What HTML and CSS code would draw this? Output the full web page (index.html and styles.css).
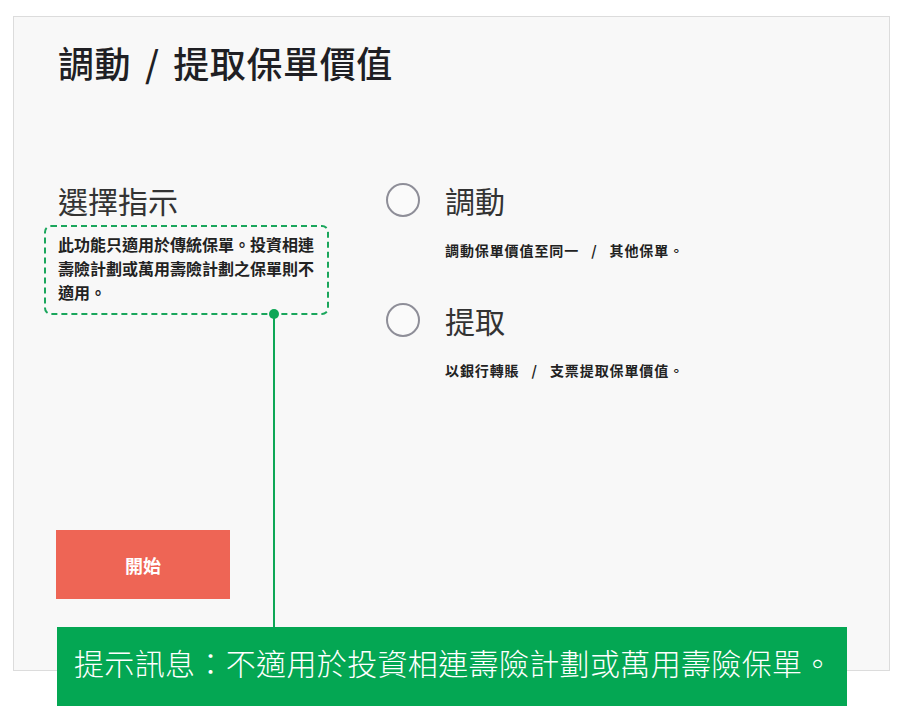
FILE: index.html
```html
<!DOCTYPE html>
<html lang="zh-Hant">
<head>
<meta charset="utf-8">
<title>調動 / 提取保單價值</title>
<link rel="stylesheet" href="styles.css">
</head>
<body>
<div class="page">
  <section class="panel">
    <h1 class="title">調動 / 提取保單價值</h1>
    <div class="body">
      <div class="left">
        <h2 class="left-heading">選擇指示</h2>
        <p class="hint">此功能只適用於傳統保單。投資相連壽險計劃或萬用壽險計劃之保單則不適用。</p>
      </div>
      <div class="options">
        <div class="option">
          <label class="option-row"><span class="radio"></span><span class="option-label">調動</span></label>
          <p class="option-desc">調動保單價值至同一 / 其他保單。</p>
        </div>
        <div class="option">
          <label class="option-row"><span class="radio"></span><span class="option-label">提取</span></label>
          <p class="option-desc">以銀行轉賬 / 支票提取保單價值。</p>
        </div>
      </div>
    </div>
    <button class="start" type="button">開始</button>
  </section>

  <div class="callout-dot"></div>
  <div class="callout-line"></div>
  <div class="callout">提示訊息：不適用於投資相連壽險計劃或萬用壽險保單。</div>
</div>
</body>
</html>
```
FILE: styles.css
```css
* { box-sizing: border-box; }
html, body { margin: 0; padding: 0; background: #ffffff; }
body {
  font-family: "Noto Sans CJK TC", "Noto Sans", sans-serif;
  color: #222;
}
.page {
  position: relative;
  width: 909px;
  height: 721px;
  padding: 16px 0 0 13px;
}
.panel {
  width: 877px;
  height: 655px;
  background: #f8f8f8;
  border: 1px solid #dcdcdc;
  padding: 23px 30px 71px 30px;
  display: flex;
  flex-direction: column;
}
.title {
  margin: 0;
  padding-left: 14px;
  font-size: 36px;
  line-height: 44px;
  font-weight: 500;
  color: #1f1f24;
  letter-spacing: 0.6px;
  word-spacing: 5px;
}
.body {
  margin-top: 98px;
  display: flex;
  gap: 57px;
}
.left { width: 285px; }
.left-heading {
  margin: 0;
  padding-left: 14px;
  font-size: 30px;
  line-height: 36px;
  font-weight: 400;
  color: #333;
}
.hint {
  margin: 7px 0 0;
  border: 2px dashed #1aa65c;
  border-radius: 7px;
  padding: 5px 8px 9px 12px;
  font-size: 16px;
  line-height: 24px;
  font-weight: 700;
  color: #222;
}
.options { display: flex; flex-direction: column; }
.option + .option { margin-top: 41px; }
.option-row {
  display: flex;
  align-items: center;
  height: 36px;
  gap: 25px;
}
.radio {
  width: 34px;
  height: 34px;
  border: 2px solid #8e8e98;
  border-radius: 50%;
  background: #fafafa;
  flex: none;
}
.option-label {
  font-size: 30px;
  line-height: 36px;
  color: #333;
}
.option-desc {
  margin: 21px 0 0 59px;
  font-size: 14px;
  line-height: 22px;
  font-weight: 700;
  color: #222;
  letter-spacing: 0.9px;
  word-spacing: 8px;
}
.start {
  margin: auto 0 0 12px;
  width: 174px;
  height: 69px;
  border: none;
  background: #ee6555;
  color: #fff;
  font-family: inherit;
  font-size: 18px;
  font-weight: 700;
}

.callout-dot {
  position: absolute;
  left: 269px;
  top: 309px;
  width: 10px;
  height: 10px;
  border-radius: 50%;
  background: #0ea756;
}
.callout-line {
  position: absolute;
  left: 273px;
  top: 314px;
  width: 2px;
  height: 313px;
  background: #0ea756;
}
.callout {
  position: absolute;
  left: 57px;
  top: 627px;
  width: 790px;
  height: 79px;
  background: #04a753;
  color: #fff;
  font-size: 30px;
  line-height: 36px;
  font-weight: 300;
  letter-spacing: 0.35px;
  padding: 17px 0 0 17px;
  white-space: nowrap;
}
```
